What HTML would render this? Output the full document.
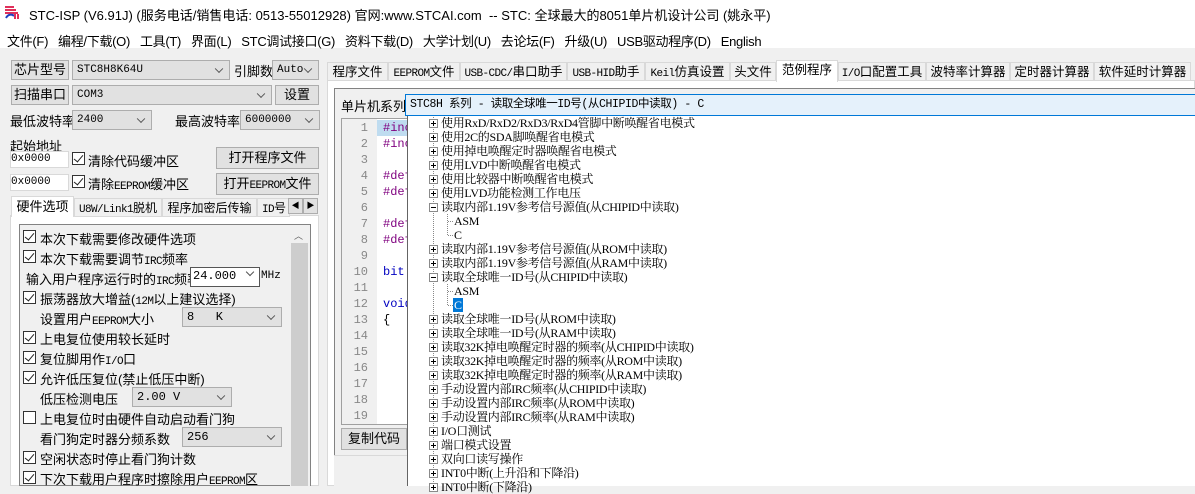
<!DOCTYPE html>
<html><head><meta charset="utf-8">
<style>
*{box-sizing:border-box;margin:0;padding:0}
body{width:1195px;height:486px;overflow:hidden;background:#f0f0f0;font-family:"Liberation Sans","Noto Sans CJK SC",sans-serif;font-size:13px;color:#000;position:relative}
.a{position:absolute;white-space:nowrap}
.m{font-family:"Liberation Mono",monospace;font-size:11px;letter-spacing:-0.6px}
.btn{position:absolute;background:#e1e1e1;border:1px solid #adadad;text-align:center;font-size:13px;white-space:nowrap;overflow:hidden}
.sel{position:absolute;background:#e1e1e1;border:1px solid #adadad;font-family:"Liberation Mono","Noto Sans CJK SC",monospace;font-size:11px;padding-left:4px}
.sel:after{content:"";position:absolute;right:7px;top:50%;width:5px;height:5px;border-right:1px solid #555;border-bottom:1px solid #555;transform:translateY(-70%) rotate(45deg)}
.inp{position:absolute;background:#fff;border:1px solid #d9d9d9;font-family:"Liberation Mono",monospace;font-size:11px;line-height:14px}
.cb{position:absolute;width:13px;height:13px;border:1px solid #333;background:#fff}
.cb.c:after{content:"";position:absolute;left:3px;top:0px;width:4px;height:8px;border-right:1.5px solid #222;border-bottom:1.5px solid #222;transform:rotate(40deg)}
.tab{position:absolute;top:62px;height:19px;background:#f0f0f0;border:1px solid #d9d9d9;font-size:12.5px;text-align:center;line-height:18px;white-space:nowrap;overflow:hidden}
.ln{position:absolute;left:342px;width:34px;text-align:right;padding-right:8px;color:#888;font-family:"Liberation Mono",monospace;font-size:12px}
.cd{position:absolute;left:383px;font-family:"Liberation Mono",monospace;font-size:12px;color:#7f007f}
.tr{position:absolute;font-size:12px;line-height:14px;white-space:nowrap;font-family:"Liberation Serif","Noto Serif CJK SC",serif;letter-spacing:-0.3px}
.pb{position:absolute;width:9px;height:9px;border:1px solid #8a8a8a;background:#fff;left:429px}
.pb:before{content:"";position:absolute;left:1px;top:3px;width:5px;height:1px;background:#000}
.pb.p:after{content:"";position:absolute;left:3px;top:1px;width:1px;height:5px;background:#000}
.hw{position:absolute;left:40px;font-size:13px;white-space:nowrap}
</style></head><body>
<div class="a" style="left:0;top:0;width:1195px;height:27px;background:#fff"></div>
<svg class="a" style="left:4px;top:5px" width="18" height="14" viewBox="0 0 18 14"><path d="M1 2h9M1 5h11M1 8h13" stroke="#e0305a" stroke-width="2"/><path d="M2 13c2-4 6-4 8-2" stroke="#2040c0" stroke-width="2" fill="none"/><path d="M11 9v5M14 9v5" stroke="#e0305a" stroke-width="2"/></svg>
<div class="a" style="left:29px;top:5px;font-size:13px">STC-ISP (V6.91J) (服务电话/销售电话: 0513-55012928) 官网:www.STCAI.com &nbsp;-- STC: 全球最大的8051单片机设计公司 (姚永平)</div>
<div class="a" style="left:0;top:27px;width:1195px;height:21px;background:#fff"></div>
<div class="a" style="left:7px;top:31px;font-size:13px;letter-spacing:-0.3px">文件(F) &nbsp;&nbsp;编程/下载(O) &nbsp;&nbsp;工具(T) &nbsp;&nbsp;界面(L) &nbsp;&nbsp;STC调试接口(G) &nbsp;&nbsp;资料下载(D) &nbsp;&nbsp;大学计划(U) &nbsp;&nbsp;去论坛(F) &nbsp;&nbsp;升级(U) &nbsp;&nbsp;USB驱动程序(D) &nbsp;&nbsp;English</div>

<div class="btn" style="left:11px;top:60px;width:58px;height:20px;line-height:18px">芯片型号</div>
<div class="sel" style="left:72px;top:60px;width:158px;height:20px;line-height:18px">STC8H8K64U</div>
<div class="a" style="left:234px;top:61px">引脚数</div>
<div class="sel" style="left:272px;top:60px;width:47px;height:20px;line-height:18px">Auto</div>
<div class="btn" style="left:11px;top:85px;width:58px;height:20px;line-height:18px">扫描串口</div>
<div class="sel" style="left:72px;top:85px;width:200px;height:20px;line-height:18px">COM3</div>
<div class="btn" style="left:275px;top:85px;width:44px;height:20px;line-height:18px">设置</div>
<div class="a" style="left:10px;top:111px">最低波特率</div>
<div class="sel" style="left:72px;top:110px;width:80px;height:20px;line-height:18px">2400</div>
<div class="a" style="left:175px;top:111px">最高波特率</div>
<div class="sel" style="left:240px;top:110px;width:80px;height:20px;line-height:18px">6000000</div>
<div class="a" style="left:10px;top:136px">起始地址</div>
<div class="inp" style="left:10px;top:151px;width:59px;height:17px">0x0000</div>
<div class="cb c" style="left:72px;top:152px"></div>
<div class="a" style="left:88px;top:151px">清除代码缓冲区</div>
<div class="btn" style="left:216px;top:147px;width:103px;height:22px;line-height:20px">打开程序文件</div>
<div class="inp" style="left:10px;top:174px;width:59px;height:17px">0x0000</div>
<div class="cb c" style="left:72px;top:175px"></div>
<div class="a" style="left:88px;top:174px">清除<span class="m">EEPROM</span>缓冲区</div>
<div class="btn" style="left:216px;top:173px;width:103px;height:22px;line-height:20px">打开<span class="m">EEPROM</span>文件</div>
<div class="a" style="left:10px;top:215px;width:309px;height:271px;background:#fff;border:1px solid #d9d9d9"></div>
<div class="a" style="left:11px;top:196px;width:63px;height:21px;background:#fff;border:1px solid #d9d9d9;border-bottom:none;text-align:center;line-height:20px">硬件选项</div>
<div class="tab" style="left:74px;top:198px;width:88px;font-size:12px"><span class="m">U8W/Link1</span>脱机</div>
<div class="tab" style="left:162px;top:198px;width:95px;font-size:12px">程序加密后传输</div>
<div class="tab" style="left:257px;top:198px;width:33px;font-size:12px;text-align:left;padding-left:4px"><span class="m">ID</span>号</div>
<div class="btn" style="left:288px;top:198px;width:15px;height:16px;font-size:8px;line-height:14px">◀</div>
<div class="btn" style="left:303px;top:198px;width:15px;height:16px;font-size:8px;line-height:14px">▶</div>
<div class="a" style="left:19px;top:224px;width:292px;height:262px;background:#f0f0f0;border:1px solid #828282"></div>
<div class="a" style="left:290px;top:225px;width:20px;height:261px;background:#f0f0f0"></div>
<div class="a" style="left:291px;top:243px;width:17px;height:243px;background:#cdcdcd"></div>
<div class="a" style="left:294px;top:229px;font-size:9px;color:#606060">︿</div>
<div class="cb c" style="left:23px;top:230px"></div><div class="hw" style="top:229px">本次下载需要修改硬件选项</div>
<div class="cb c" style="left:23px;top:250px"></div><div class="hw" style="top:249px">本次下载需要调节<span class="m">IRC</span>频率</div>
<div class="a" style="left:26px;top:269px">输入用户程序运行时的<span class="m">IRC</span>频率</div>
<div class="inp" style="left:190px;top:267px;width:70px;height:20px;border-color:#555;line-height:17px;font-size:12px;padding-left:2px">24.000</div>
<div class="a" style="left:247px;top:269px;width:6px;height:6px;border-right:1px solid #555;border-bottom:1px solid #555;transform:rotate(45deg)"></div>
<div class="a" style="left:261px;top:270px;font-size:11px;font-family:'Liberation Mono',monospace">MHz</div>
<div class="cb c" style="left:23px;top:291px"></div><div class="hw" style="top:289px">振荡器放大增益(<span class="m">12M</span>以上建议选择)</div>
<div class="a" style="left:40px;top:309px">设置用户<span class="m">EEPROM</span>大小</div>
<div class="sel" style="left:182px;top:307px;width:100px;height:20px;line-height:18px;font-size:12px">8 &nbsp;&nbsp;K</div>
<div class="cb c" style="left:23px;top:331px"></div><div class="hw" style="top:329px">上电复位使用较长延时</div>
<div class="cb c" style="left:23px;top:351px"></div><div class="hw" style="top:349px">复位脚用作<span class="m">I/O</span>口</div>
<div class="cb c" style="left:23px;top:371px"></div><div class="hw" style="top:369px">允许低压复位(禁止低压中断)</div>
<div class="a" style="left:40px;top:389px">低压检测电压</div>
<div class="sel" style="left:132px;top:387px;width:100px;height:20px;line-height:18px;font-size:12px">2.00 V</div>
<div class="cb" style="left:23px;top:411px"></div><div class="hw" style="top:409px">上电复位时由硬件自动启动看门狗</div>
<div class="a" style="left:40px;top:429px">看门狗定时器分频系数</div>
<div class="sel" style="left:182px;top:427px;width:100px;height:20px;line-height:18px;font-size:12px">256</div>
<div class="cb c" style="left:23px;top:451px"></div><div class="hw" style="top:449px">空闲状态时停止看门狗计数</div>
<div class="cb c" style="left:23px;top:471px"></div><div class="hw" style="top:469px">下次下载用户程序时擦除用户<span class="m">EEPROM</span>区</div>

<div class="a" style="left:327px;top:80px;width:868px;height:406px;background:#fff;border:1px solid #d9d9d9"></div>
<div class="tab" style="left:327px;width:61px">程序文件</div>
<div class="tab" style="left:388px;width:72px"><span class="m">EEPROM</span>文件</div>
<div class="tab" style="left:460px;width:107px"><span class="m">USB-CDC/</span>串口助手</div>
<div class="tab" style="left:567px;width:78px"><span class="m">USB-HID</span>助手</div>
<div class="tab" style="left:645px;width:85px"><span class="m">Keil</span>仿真设置</div>
<div class="tab" style="left:730px;width:46px">头文件</div>
<div class="tab" style="left:776px;top:60px;height:22px;width:62px;background:#fff;border-bottom:none">范例程序</div>
<div class="tab" style="left:838px;width:88px"><span class="m">I/O</span>口配置工具</div>
<div class="tab" style="left:926px;width:84px">波特率计算器</div>
<div class="tab" style="left:1010px;width:84px">定时器计算器</div>
<div class="tab" style="left:1094px;width:97px">软件延时计算器</div>
<div class="a" style="left:334px;top:88px;width:861px;height:368px;border:1px solid #828282;border-right:none;background:#f0f0f0"></div>
<div class="a" style="left:334px;top:455px;width:861px;height:31px;border-top:1px solid #d9d9d9;background:#f0f0f0"></div>
<div class="a" style="left:341px;top:96px">单片机系列</div>
<div class="a" style="left:405px;top:94px;width:790px;height:22px;background:#e5f1fb;border:1px solid #0078d7;border-right:none;font-family:'Liberation Mono','Noto Sans CJK SC',monospace;font-size:11.5px;letter-spacing:-0.4px;line-height:20px;padding-left:4px">STC8H 系列 - 读取全球唯一ID号(从CHIPID中读取) - C</div>
<div class="a" style="left:341px;top:118px;width:70px;height:307px;background:#fff;border:1px solid #a0a0a0"></div>
<div class="a" style="left:342px;top:119px;width:35px;height:305px;background:#f0f0f0"></div>
<div class="a" style="left:377px;top:120px;width:34px;height:16px;background:#bfdcf0"></div>
<div class="ln" style="top:121px">1</div><div class="ln" style="top:137px">2</div><div class="ln" style="top:153px">3</div><div class="ln" style="top:169px">4</div><div class="ln" style="top:185px">5</div><div class="ln" style="top:201px">6</div><div class="ln" style="top:217px">7</div><div class="ln" style="top:233px">8</div><div class="ln" style="top:249px">9</div><div class="ln" style="top:265px">10</div><div class="ln" style="top:281px">11</div><div class="ln" style="top:297px">12</div><div class="ln" style="top:313px">13</div><div class="ln" style="top:329px">14</div><div class="ln" style="top:345px">15</div><div class="ln" style="top:361px">16</div><div class="ln" style="top:377px">17</div><div class="ln" style="top:393px">18</div><div class="ln" style="top:409px">19</div>
<div class="cd" style="top:121px">#inc</div><div class="cd" style="top:137px">#inc</div><div class="cd" style="top:169px">#def</div><div class="cd" style="top:185px">#def</div><div class="cd" style="top:217px">#def</div><div class="cd" style="top:233px">#def</div>
<div class="cd" style="top:265px;color:#0000c0">bit</div><div class="cd" style="top:297px;color:#0000c0">void</div><div class="cd" style="top:313px;color:#000">{</div>
<div class="btn" style="left:341px;top:428px;width:66px;height:22px;line-height:20px">复制代码</div>

<div class="a" style="left:407px;top:116px;width:788px;height:370px;background:#fff;border-left:1px solid #646464"></div>
<div class="a" style="left:433px;top:117px;height:369px;border-left:1px dotted #888"></div>
<div class="a" style="left:447px;top:214px;height:21px;border-left:1px dotted #888"></div>
<div class="a" style="left:447px;top:284px;height:21px;border-left:1px dotted #888"></div>
<div class="a" style="left:448px;top:221px;width:5px;border-top:1px dotted #888"></div>
<div class="a" style="left:448px;top:235px;width:5px;border-top:1px dotted #888"></div>
<div class="a" style="left:448px;top:291px;width:5px;border-top:1px dotted #888"></div>
<div class="a" style="left:448px;top:305px;width:5px;border-top:1px dotted #888"></div>
<div class="a" style="left:453px;top:298px;width:10px;height:14px;background:#0078d7"></div>
<div class="pb p" style="top:119px"></div><div class="tr" style="left:441px;top:116px">使用RxD/RxD2/RxD3/RxD4管脚中断唤醒省电模式</div>
<div class="pb p" style="top:133px"></div><div class="tr" style="left:441px;top:130px">使用2C的SDA脚唤醒省电模式</div>
<div class="pb p" style="top:147px"></div><div class="tr" style="left:441px;top:144px">使用掉电唤醒定时器唤醒省电模式</div>
<div class="pb p" style="top:161px"></div><div class="tr" style="left:441px;top:158px">使用LVD中断唤醒省电模式</div>
<div class="pb p" style="top:175px"></div><div class="tr" style="left:441px;top:172px">使用比较器中断唤醒省电模式</div>
<div class="pb p" style="top:189px"></div><div class="tr" style="left:441px;top:186px">使用LVD功能检测工作电压</div>
<div class="pb" style="top:203px"></div><div class="tr" style="left:441px;top:200px">读取内部1.19V参考信号源值(从CHIPID中读取)</div>
<div class="tr" style="left:454px;top:214px">ASM</div>
<div class="tr" style="left:454px;top:228px">C</div>
<div class="pb p" style="top:245px"></div><div class="tr" style="left:441px;top:242px">读取内部1.19V参考信号源值(从ROM中读取)</div>
<div class="pb p" style="top:259px"></div><div class="tr" style="left:441px;top:256px">读取内部1.19V参考信号源值(从RAM中读取)</div>
<div class="pb" style="top:273px"></div><div class="tr" style="left:441px;top:270px">读取全球唯一ID号(从CHIPID中读取)</div>
<div class="tr" style="left:454px;top:284px">ASM</div>
<div class="tr" style="left:454px;top:298px;color:#fff">C</div>
<div class="pb p" style="top:315px"></div><div class="tr" style="left:441px;top:312px">读取全球唯一ID号(从ROM中读取)</div>
<div class="pb p" style="top:329px"></div><div class="tr" style="left:441px;top:326px">读取全球唯一ID号(从RAM中读取)</div>
<div class="pb p" style="top:343px"></div><div class="tr" style="left:441px;top:340px">读取32K掉电唤醒定时器的频率(从CHIPID中读取)</div>
<div class="pb p" style="top:357px"></div><div class="tr" style="left:441px;top:354px">读取32K掉电唤醒定时器的频率(从ROM中读取)</div>
<div class="pb p" style="top:371px"></div><div class="tr" style="left:441px;top:368px">读取32K掉电唤醒定时器的频率(从RAM中读取)</div>
<div class="pb p" style="top:385px"></div><div class="tr" style="left:441px;top:382px">手动设置内部IRC频率(从CHIPID中读取)</div>
<div class="pb p" style="top:399px"></div><div class="tr" style="left:441px;top:396px">手动设置内部IRC频率(从ROM中读取)</div>
<div class="pb p" style="top:413px"></div><div class="tr" style="left:441px;top:410px">手动设置内部IRC频率(从RAM中读取)</div>
<div class="pb p" style="top:427px"></div><div class="tr" style="left:441px;top:424px">I/O口测试</div>
<div class="pb p" style="top:441px"></div><div class="tr" style="left:441px;top:438px">端口模式设置</div>
<div class="pb p" style="top:455px"></div><div class="tr" style="left:441px;top:452px">双向口读写操作</div>
<div class="pb p" style="top:469px"></div><div class="tr" style="left:441px;top:466px">INT0中断(上升沿和下降沿)</div>
<div class="pb p" style="top:483px"></div><div class="tr" style="left:441px;top:480px">INT0中断(下降沿)</div>
</body></html>
